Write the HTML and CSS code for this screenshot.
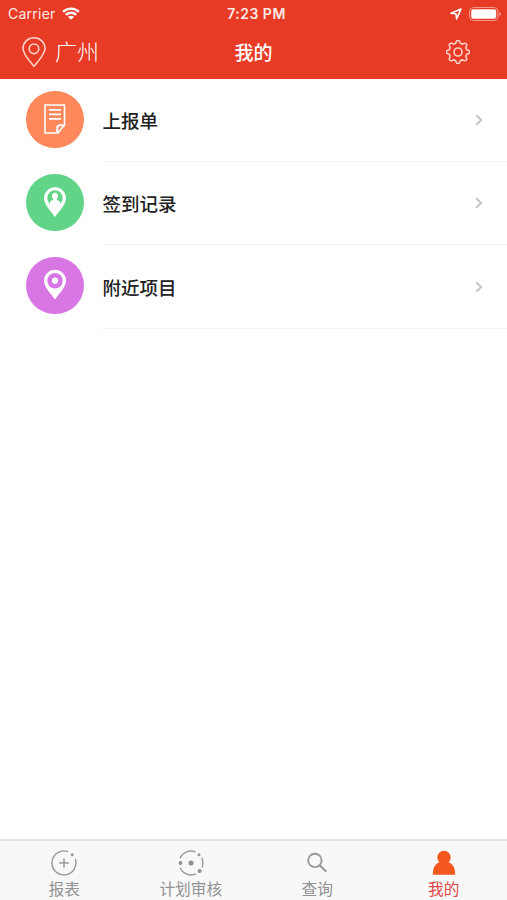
FILE: index.html
```html
<!DOCTYPE html>
<html lang="zh-CN">
<head>
  <meta charset="UTF-8" />
  <meta name="viewport" content="width=device-width, initial-scale=1.0" />
  <title>我的</title>
  <link rel="stylesheet" href="styles.css">
</head>
<body>
  <header class="header">
    <div class="status-bar">
      <div class="status-left">
        <span class="carrier">Carrier</span>
        <svg class="wifi" viewBox="0 0 18 13" width="18" height="13">
          <path d="M1.1 4.8a11.4 11.4 0 0 1 15.8 0M3.9 7.9a7.3 7.3 0 0 1 10.2 0" fill="none" stroke="#fff" stroke-width="2.4" />
          <path d="M9 12.7L6 9.9a4.2 4.2 0 0 1 6 0z" fill="#fff" />
        </svg>
      </div>
      <span class="time">7:23 PM</span>
      <div class="status-right">
        <svg viewBox="0 0 12 12" width="12" height="12">
          <path d="M10.9 1.1L1 5.3l5 .7.6 5z" fill="none" stroke="#fff" stroke-width="1.6" stroke-linejoin="round" />
        </svg>
        <svg viewBox="0 0 33 14" width="33" height="14">
          <rect x=".5" y=".5" width="28.5" height="13" rx="4" fill="none" stroke="#f49a8c" />
          <rect x="2.2" y="2.2" width="25" height="9.6" rx="2.2" fill="#fff" />
          <path d="M30.3 5v4q1.6-.6 1.6-2t-1.6-2z" fill="#f49a8c" />
        </svg>
      </div>
    </div>
    <div class="nav-bar">
      <div class="location">
        <svg viewBox="0 0 24 31" width="24" height="31">
          <path d="M12 29.3C9 25.5 1 17.3 1 11.4a11 10.6 0 0 1 22 0C23 17.3 15 25.5 12 29.3z" />
          <circle cx="12" cy="11.8" r="4.8" />
        </svg>
        <span>广州</span>
      </div>
      <h1 class="title">我的</h1>
      <svg class="settings" viewBox="-12 -12 24 24" width="24" height="24">
        <path d="M-1.57-10.7A1.8 1.8 0 0 1 1.57-10.7L2.3-8.8Q3.3-8 4.6-7.9L6.5-8.7A1.8 1.8 0 0 1 8.7-6.5L7.9-4.6Q8-3.3 8.8-2.3L10.7-1.57A1.8 1.8 0 0 1 10.7 1.57L8.8 2.3Q8 3.3 7.9 4.6L8.7 6.5A1.8 1.8 0 0 1 6.5 8.7L4.6 7.9Q3.3 8 2.3 8.8L1.57 10.7A1.8 1.8 0 0 1-1.57 10.7L-2.3 8.8Q-3.3 8-4.6 7.9L-6.5 8.7A1.8 1.8 0 0 1-8.7 6.5L-7.9 4.6Q-8 3.3-8.8 2.3L-10.7 1.57A1.8 1.8 0 0 1-10.7-1.57L-8.8-2.3Q-8-3.3-7.9-4.6L-8.7-6.5A1.8 1.8 0 0 1-6.5-8.7L-4.6-7.9Q-3.3-8-2.3-8.8z" />
        <circle r="4" />
      </svg>
    </div>
  </header>

  <main class="list">
    <div class="list-item">
      <div class="icon orange">
        <svg viewBox="0 0 24 32" width="24" height="32">
          <path d="M2 2h19.5v20L15 30H2z" fill="none" stroke="#fff" stroke-width="1.6" stroke-linejoin="round" />
          <path d="M14.3 30v-5.2q0-2.5 2.5-2.5h4.7" fill="none" stroke="#fff" stroke-width="2" />
          <path d="M6 6.8h12M6 11.3h12M6 15.8h12" stroke="#fff" stroke-width="1.7" />
        </svg>
      </div>
      <div class="item-body">
        <span>上报单</span>
        <svg class="arrow" viewBox="0 0 8 12" width="8" height="12"><path d="M1.2 1.2L6.2 6l-5 4.8" /></svg>
      </div>
    </div>
    <div class="list-item">
      <div class="icon green">
        <svg viewBox="0 0 24 32" width="24" height="32">
          <path d="M12 31C8.5 25.5 1 19.2 1 12.2a11 11 0 0 1 22 0C23 19.2 15.5 25.5 12 31z" fill="#fff" />
          <circle cx="12" cy="12" r="7.7" fill="#62d488" />
          <path d="M12 6.5a3.3 3.5 0 0 1 2 6.1v1.500l3 1.500V20H7v-4.400l3-1.500v-1.500a3.300 3.500 0 0 1 2-6.100z" fill="#fff" />
        </svg>
      </div>
      <div class="item-body">
        <span>签到记录</span>
        <svg class="arrow" viewBox="0 0 8 12" width="8" height="12"><path d="M1.2 1.2L6.2 6l-5 4.8" /></svg>
      </div>
    </div>
    <div class="list-item">
      <div class="icon purple">
        <svg viewBox="0 0 24 32" width="24" height="32">
          <path d="M12 30.5C8.5 25 1 18.7 1 11.7a11 11 0 0 1 22 0C23 18.7 15.5 25 12 30.5z" fill="#fff" />
          <circle cx="12" cy="11.7" r="7.7" fill="#d876e4" />
          <circle cx="12" cy="11.7" r="3.1" fill="#fff" />
        </svg>
      </div>
      <div class="item-body">
        <span>附近项目</span>
        <svg class="arrow" viewBox="0 0 8 12" width="8" height="12"><path d="M1.2 1.2L6.2 6l-5 4.8" /></svg>
      </div>
    </div>
  </main>

  <nav class="tab-bar">
    <div class="tab">
      <svg viewBox="0 0 26 26" width="26" height="26">
        <path d="M17.2 1.7A12 12 0 1 0 24.300 9M13 8.200v9.600M8.200 13h9.600" fill="none" stroke="#999" stroke-width="1.400" />
        <circle cx="21.3" cy="4.8" r="1.5" fill="#999" />
      </svg>
      <span>报表</span>
    </div>
    <div class="tab">
      <svg viewBox="0 0 26 26" width="26" height="26">
        <path d="M2 8.2A12 12 0 0 1 17.5 1.9M23.7 7.7A12 12 0 0 1 24 17.5M18 23.9A12 12 0 0 1 2.2 18" fill="none" stroke="#999" stroke-width="1.4" />
        <circle cx="13" cy="13" r="2.5" fill="#8e8e8e" />
        <circle cx="2.5" cy="13" r="1.9" fill="#8e8e8e" />
        <circle cx="21" cy="4.8" r="1.5" fill="#999" />
        <circle cx="21.6" cy="21" r="2" fill="#8e8e8e" />
      </svg>
      <span>计划审核</span>
    </div>
    <div class="tab">
      <svg viewBox="0 0 26 26" width="26" height="26">
        <circle cx="10.9" cy="10.4" r="6.7" fill="none" stroke="#999" stroke-width="1.9" />
        <path d="M15.7 15.2l6.6 6.6" stroke="#999" stroke-width="2.2" />
      </svg>
      <span>查询</span>
    </div>
    <div class="tab active">
      <svg viewBox="0 0 26 26" width="26" height="26">
        <path d="M8.3 12.3a6.7 6.8 0 1 1 9.4 0c4.2 1.8 6.5 5.5 6.5 12.4H1.8c0-6.9 2.3-10.6 6.5-12.4z" fill="#f4581f" />
      </svg>
      <span>我的</span>
    </div>
  </nav>
</body>
</html>
```

FILE: styles.css
```css
* {
  box-sizing: border-box;
}
body {
  margin: 0;
  height: 100vh;
  display: flex;
  flex-direction: column;
  font-family: "Noto Sans CJK SC", sans-serif;
  background-color: #fff;
  color: #222;
  overflow: hidden;
}
svg {
  display: block;
  flex-shrink: 0;
}
.header {
  height: 79px;
  background-color: #e73b26;
  color: #fff;
}
.status-bar {
  display: grid;
  grid-template-columns: 1fr auto 1fr;
  align-items: center;
  height: 27px;
  padding: 0 5px 0 8px;
  font-family: Inter, sans-serif;
  font-size: 14px;
}
.status-left {
  display: flex;
  align-items: center;
  gap: 6px;
}
.carrier {
  letter-spacing: 0.25px;
  color: #ffe9e5;
}
.time {
  margin-right: -3px;
  font-weight: 600;
  letter-spacing: 0.5px;
  color: #ffe9e5;
}
.status-right {
  display: flex;
  justify-content: flex-end;
  align-items: center;
  gap: 7px;
}
.nav-bar {
  display: grid;
  grid-template-columns: 1fr auto 1fr;
  align-items: center;
  height: 50px;
  padding: 0 37px 0 22px;
}
.location {
  display: flex;
  align-items: center;
  gap: 9px;
  font-size: 22px;
  font-weight: 300;
  line-height: 30px;
}
.location span {
  margin-bottom: 5px;
}
.location svg {
  fill: none;
  stroke: #ffd0c8;
  stroke-width: 1.6;
}
.title {
  margin: 0 -8px 0 7px;
  font-size: 19px;
  font-weight: 500;
  line-height: 28px;
}
.settings {
  justify-self: end;
  fill: none;
  stroke: #ffd0c8;
  stroke-width: 1.6;
  stroke-linejoin: round;
}
.list {
  flex: 1;
}
.list-item {
  display: flex;
  height: 83px;
  padding-left: 26px;
}
.list-item:last-child {
  height: 84px;
}
.icon {
  display: flex;
  justify-content: center;
  align-items: center;
  width: 57.5px;
  height: 57.5px;
  margin: 11.5px 19px 0 0;
  border-radius: 50%;
}
.orange {
  background-color: #fc885b;
}
.green {
  background-color: #62d488;
}
.purple {
  background-color: #d876e4;
}
.item-body {
  flex: 1;
  display: flex;
  justify-content: space-between;
  align-items: center;
  padding-right: 24px;
  border-bottom: 1px solid #f0f0f0;
  font-size: 18.5px;
  font-weight: 500;
}
.arrow {
  fill: none;
  stroke: #c4c4c4;
  stroke-width: 1.9;
}
.tab-bar {
  display: grid;
  grid-template-columns: repeat(4, 1fr);
  height: 61px;
  padding-left: 1px;
  background-color: #f8f8f8;
  border-top: 2px solid #e4e4e4;
}
.tab {
  display: flex;
  flex-direction: column;
  align-items: center;
  padding-top: 9px;
  font-size: 15.7px;
  line-height: 24px;
  color: #929292;
}
.tab span {
  margin-top: 1px;
}
.active {
  color: #e04747;
}
```
